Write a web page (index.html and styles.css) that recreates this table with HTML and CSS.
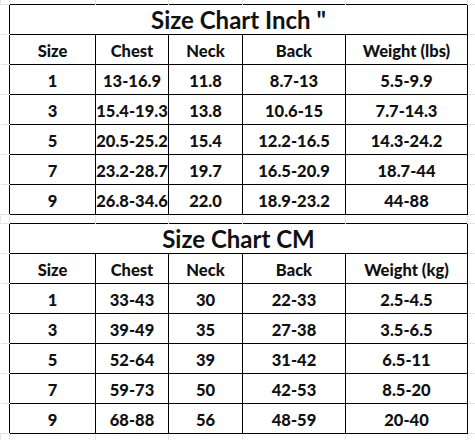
FILE: index.html
```html
<!DOCTYPE html>
<html lang="en">
<head>
<meta charset="utf-8">
<title>Size Chart</title>
<link rel="stylesheet" href="styles.css">
</head>
<body>
<table class="sheet">
  <colgroup>
    <col class="c-g1"><col class="c-size"><col class="c-chest"><col class="c-neck"><col class="c-back"><col class="c-weight"><col class="c-g2">
  </colgroup>
  <tbody>
    <tr class="edge-top"><td class="gl"></td><td class="gap"></td><td class="gap"></td><td class="gap"></td><td class="gap"></td><td class="gap"></td><td class="gr"></td></tr>

    <tr class="row"><td class="gl"></td><td class="title" colspan="5">Size Chart Inch "</td><td class="gr"></td></tr>
    <tr class="row"><td class="gl"></td><td>Size</td><td>Chest</td><td>Neck</td><td>Back</td><td>Weight (lbs)</td><td class="gr"></td></tr>
    <tr class="row"><td class="gl"></td><td>1</td><td>13-16.9</td><td>11.8</td><td>8.7-13</td><td>5.5-9.9</td><td class="gr"></td></tr>
    <tr class="row"><td class="gl"></td><td>3</td><td>15.4-19.3</td><td>13.8</td><td>10.6-15</td><td>7.7-14.3</td><td class="gr"></td></tr>
    <tr class="row"><td class="gl"></td><td>5</td><td>20.5-25.2</td><td>15.4</td><td>12.2-16.5</td><td>14.3-24.2</td><td class="gr"></td></tr>
    <tr class="row"><td class="gl"></td><td>7</td><td>23.2-28.7</td><td>19.7</td><td>16.5-20.9</td><td>18.7-44</td><td class="gr"></td></tr>
    <tr class="row"><td class="gl"></td><td>9</td><td>26.8-34.6</td><td>22.0</td><td>18.9-23.2</td><td>44-88</td><td class="gr"></td></tr>

    <tr class="spacer"><td class="gl"></td><td class="gap"></td><td class="gap"></td><td class="gap"></td><td class="gap"></td><td class="gap"></td><td class="gr"></td></tr>

    <tr class="row"><td class="gl"></td><td class="title" colspan="5">Size Chart CM</td><td class="gr"></td></tr>
    <tr class="row"><td class="gl"></td><td>Size</td><td>Chest</td><td>Neck</td><td>Back</td><td>Weight (kg)</td><td class="gr"></td></tr>
    <tr class="row"><td class="gl"></td><td>1</td><td>33-43</td><td>30</td><td>22-33</td><td>2.5-4.5</td><td class="gr"></td></tr>
    <tr class="row"><td class="gl"></td><td>3</td><td>39-49</td><td>35</td><td>27-38</td><td>3.5-6.5</td><td class="gr"></td></tr>
    <tr class="row"><td class="gl"></td><td>5</td><td>52-64</td><td>39</td><td>31-42</td><td>6.5-11</td><td class="gr"></td></tr>
    <tr class="row"><td class="gl"></td><td>7</td><td>59-73</td><td>50</td><td>42-53</td><td>8.5-20</td><td class="gr"></td></tr>
    <tr class="row"><td class="gl"></td><td>9</td><td>68-88</td><td>56</td><td>48-59</td><td>20-40</td><td class="gr"></td></tr>

    <tr class="edge-bottom"><td class="gl"></td><td class="gap"></td><td class="gap"></td><td class="gap"></td><td class="gap"></td><td class="gap"></td><td class="gr"></td></tr>
  </tbody>
</table>
</body>
</html>
```

FILE: styles.css
```css
html, body {
  margin: 0;
  padding: 0;
  background: #ffffff;
}

.sheet {
  border-collapse: collapse;
  table-layout: fixed;
  width: 475px;
  font-family: Lato, "Open Sans", "Liberation Sans", sans-serif;
  font-weight: 900;
  color: #111111;
}

.c-g1 { width: 9px; }
.c-size { width: 86px; }
.c-chest { width: 73px; }
.c-neck { width: 74px; }
.c-back { width: 103px; }
.c-weight { width: 122px; }
.c-g2 { width: 8px; }

.sheet td {
  padding: 0;
  text-align: center;
  vertical-align: middle;
  white-space: nowrap;
  overflow: hidden;
}

.row td {
  height: 27px;
  border: 1px solid #000;
  font-size: 16.5px;
  line-height: 20px;
  padding-top: 2px;
}

.row td.title {
  font-size: 24px;
  font-weight: 700;
  padding-top: 1px;
  height: 28px;
}

.row td.gl,
.row td.gr {
  border: none;
  border-top: 1px solid #e3e3e3;
  border-bottom: 1px solid #e3e3e3;
}

.edge-top td {
  height: 4px;
  border: none;
  border-left: 1px solid #e3e3e3;
  border-right: 1px solid #e3e3e3;
}

.spacer td {
  height: 8px;
  border: none;
  border-left: 1px solid #e6e6e6;
  border-right: 1px solid #e6e6e6;
}

.edge-bottom td {
  height: 6px;
  border: none;
  border-left: 1px solid #e6e6e6;
  border-right: 1px solid #e6e6e6;
}
```
